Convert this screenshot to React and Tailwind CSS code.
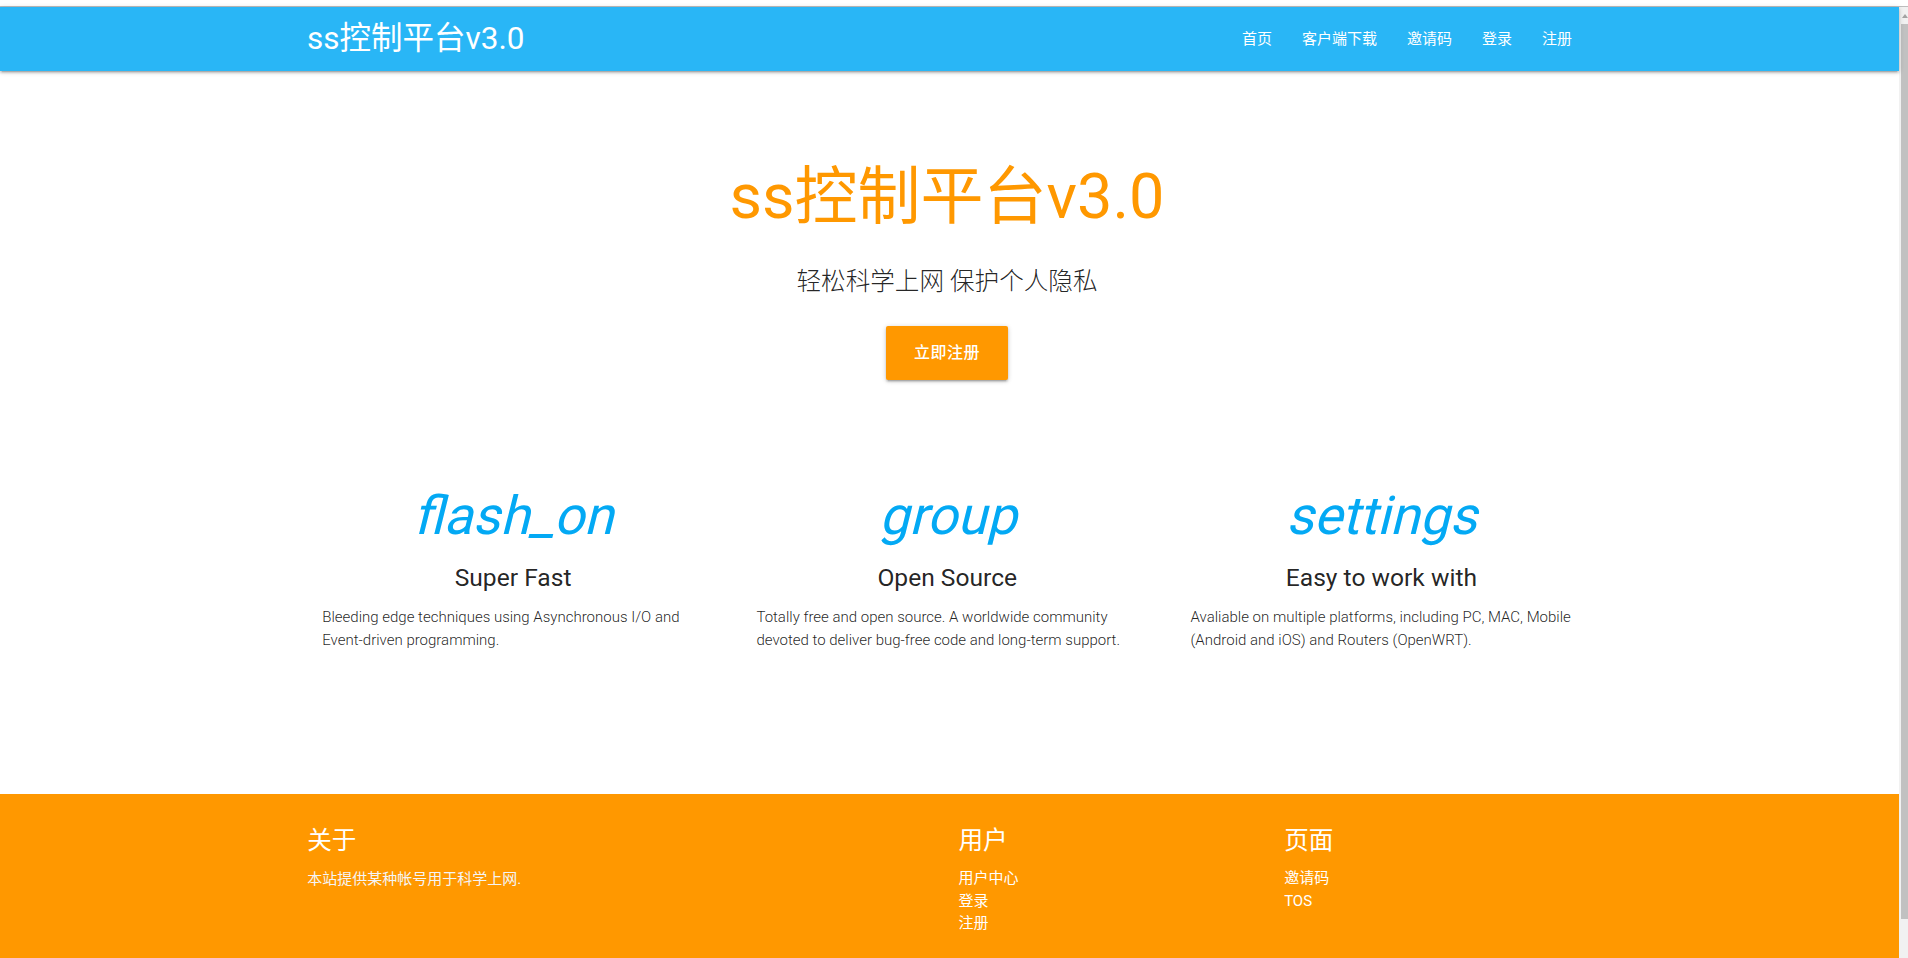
import React from 'react';

const navLinks = ['首页', '客户端下载', '邀请码', '登录', '注册'];

const features = [
  {
    icon: 'flash_on',
    title: 'Super Fast',
    lines: ['Bleeding edge techniques using Asynchronous I/O and', 'Event-driven programming.'],
  },
  {
    icon: 'group',
    title: 'Open Source',
    lines: ['Totally free and open source. A worldwide community', 'devoted to deliver bug-free code and long-term support.'],
  },
  {
    icon: 'settings',
    title: 'Easy to work with',
    lines: ['Avaliable on multiple platforms, including PC, MAC, Mobile', '(Android and iOS) and Routers (OpenWRT).'],
  },
];

const shadow =
  'shadow-[0_2px_2px_0_rgba(0,0,0,0.14),0_3px_1px_-2px_rgba(0,0,0,0.12),0_1px_5px_0_rgba(0,0,0,0.2)]';

const App = () => {
  return (
    <div className="flex h-screen flex-col overflow-hidden bg-white font-['Roboto','Noto_Sans_CJK_SC',sans-serif] text-black/87">
      {/* browser edge */}
      <div className="h-[7px] shrink-0 border-b border-[#bdbdbd] bg-white" />

      <div className="flex min-h-0 flex-1">
        <div className="min-w-0 flex-1">
          {/* Nav */}
          <nav className={`relative z-10 h-16 bg-[#29b6f6] ${shadow}`}>
            <div className="ml-[307px] flex h-full w-[1280px] items-center justify-between">
              <a className="text-[31.5px] leading-[64px] text-white">ss控制平台v3.0</a>
              <ul className="flex">
                {navLinks.map((l) => (
                  <li key={l}>
                    <a className="block px-[15px] text-[15px] leading-[64px] text-white">{l}</a>
                  </li>
                ))}
              </ul>
            </div>
          </nav>

          {/* Banner */}
          <div className="ml-[307px] flex w-[1280px] flex-col items-center">
            <h1 className="mt-[91px] text-center text-[63px] leading-[69px] text-[#ff9800]">ss控制平台v3.0</h1>
            <h5 className="mt-[37px] text-center text-[24.6px] font-light leading-[27px]">轻松科学上网 保护个人隐私</h5>
            <a className={`mt-[31px] block h-[54px] rounded-[2px] bg-[#ff9800] px-[28px] text-[16px] font-medium leading-[54px] tracking-[0.5px] text-white ${shadow}`}>
              立即注册
            </a>
          </div>

          {/* Features */}
          <div className="ml-[296px] mt-[106px] grid w-[1302.5px] grid-cols-3">
            {features.map((f) => (
              <div key={f.icon} className="px-[26.25px]">
                {/* icon font missing -> ligature name shown in fake oblique */}
                <h2 className="text-center text-[53.4px] leading-[59px] text-[#03a9f4]">
                  <span className="inline-block origin-[50%_48px] -skew-x-[14deg]">{f.icon}</span>
                </h2>
                <h5 className="mt-[19px] text-center text-[24.6px] leading-[27px]">{f.title}</h5>
                <p className="mt-[15px] whitespace-nowrap text-[15px] font-light leading-[22.5px]">
                  {f.lines[0]}
                  <br />
                  {f.lines[1]}
                </p>
              </div>
            ))}
          </div>

          {/* Footer */}
          <footer className="mt-[143px] h-[400px] bg-[#ff9800] pt-[20px] text-white">
            <div className="ml-[296px] grid w-[1302.5px] grid-cols-[2fr_1fr_1fr]">
              <div className="px-[11.25px]">
                <h5 className="mt-[13px] text-[24.6px] leading-[27px]">关于</h5>
                <p className="mt-[14px] text-[15px] leading-[22.5px] text-[#f5f5f5]">本站提供某种帐号用于科学上网.</p>
              </div>
              <div className="px-[11.25px]">
                <h5 className="mt-[13px] text-[24.6px] leading-[27px]">用户</h5>
                <ul className="mt-[13px] text-[15px] leading-[22.5px]">
                  <li><a>用户中心</a></li>
                  <li><a>登录</a></li>
                  <li><a>注册</a></li>
                </ul>
              </div>
              <div className="px-[11.25px]">
                <h5 className="mt-[13px] text-[24.6px] leading-[27px]">页面</h5>
                <ul className="mt-[13px] text-[15px] leading-[22.5px]">
                  <li><a>邀请码</a></li>
                  <li><a>TOS</a></li>
                </ul>
              </div>
            </div>
          </footer>
        </div>

        {/* scrollbar */}
        <div className="flex w-[9px] shrink-0 flex-col bg-[#f1f1f1] pl-[2px]">
          <div className="flex h-[17px] items-center justify-center">
            <div className="h-0 w-0 border-x-[3px] border-b-[4px] border-x-transparent border-b-[#a3a3a3]" />
          </div>
          <div className="h-[895px] bg-[#c1c1c1]" />
        </div>
      </div>
    </div>
  );
};

export default App;
